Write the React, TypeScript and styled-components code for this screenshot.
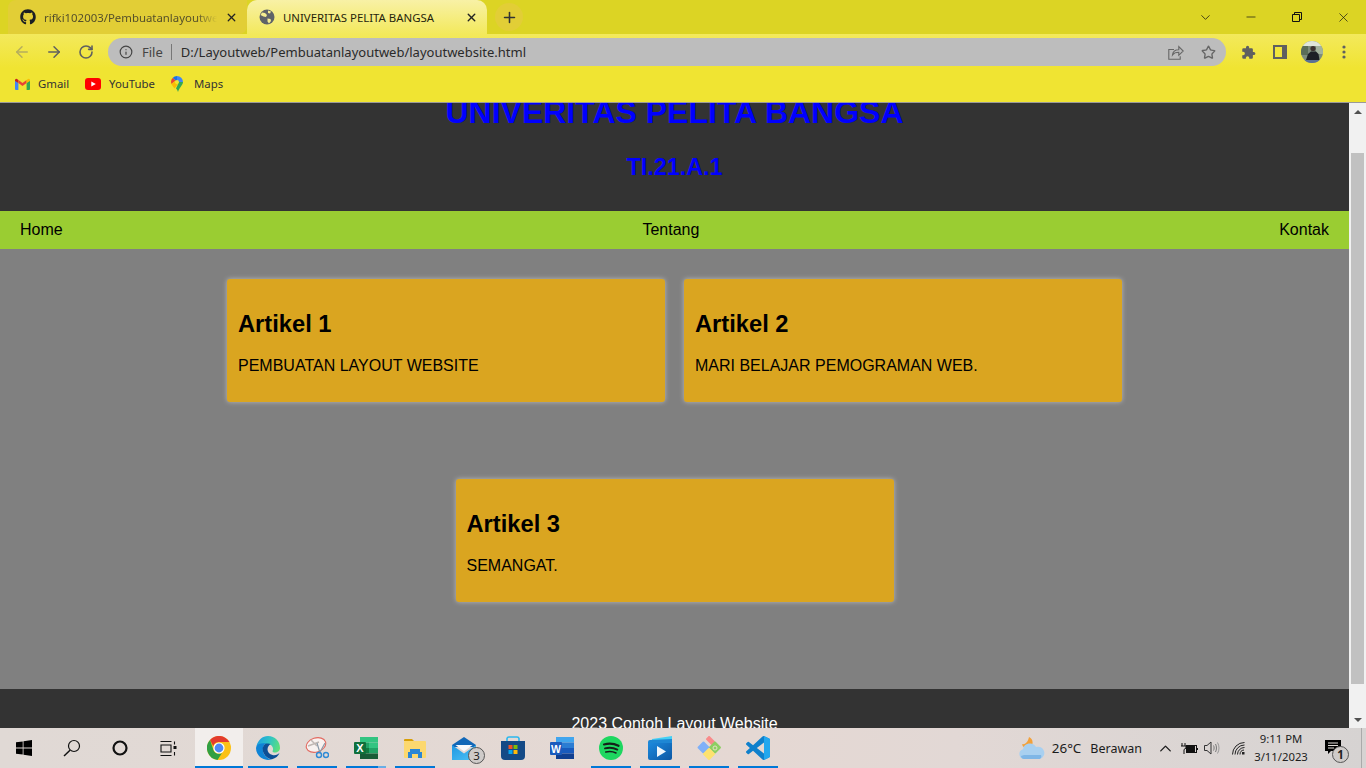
import React from 'react';
import styled, { createGlobalStyle } from 'styled-components';
import { FaGithub } from 'react-icons/fa';
import { ArrowLeft, ArrowRight, RotateCw, Info, Star, ChevronDown, ChevronUp, Minus, X, Plus } from 'lucide-react';

const GlobalStyle = createGlobalStyle`
  html, body {
    margin: 0;
    height: 100%;
    overflow: hidden;
    font-family: 'Liberation Sans', Arial, sans-serif;
  }
  * { box-sizing: border-box; }
`;

const Screen = styled.div`
  height: 768px;
  display: flex;
  flex-direction: column;
  overflow: hidden;
`;

const BrowserFrame = styled.div`
  flex: none;
  height: 103px;
  background: #f0e432;
  border-bottom: 1px solid #9a9a9a;
  font-family: 'Noto Sans', sans-serif;
`;

const TabStrip = styled.div`
  height: 34px;
  padding-left: 8px;
  display: flex;
  align-items: stretch;
  background: #dcd424;
`;

const InactiveTab = styled.div`
  width: 239px;
  padding: 0 9px 0 12px;
  display: flex;
  align-items: center;
  gap: 8px;
  background: #e2ce36;
  border-radius: 8px 0 8px 0;
  color: #55502a;
  font-size: 11.4px;
`;

const ActiveTab = styled.div`
  width: 240px;
  padding: 0 9px 0 12px;
  display: flex;
  align-items: center;
  gap: 8px;
  background: linear-gradient(#f8f1a6, #f3e95c);
  border-radius: 10px 10px 0 0;
  color: #26240c;
  font-size: 11.4px;
`;

const TabTitle = styled.span<{ $fade?: boolean }>`
  flex: 1;
  white-space: nowrap;
  overflow: hidden;
  ${(p) => p.$fade && 'mask-image: linear-gradient(to right, #000 88%, transparent);'}
`;

const TabClose = styled(X)`
  flex: none;
  color: #222;
`;

const NewTabButton = styled.div`
  align-self: center;
  width: 28px;
  height: 28px;
  margin-left: 8px;
  display: flex;
  align-items: center;
  justify-content: center;
  border-radius: 50%;
  background: #e2ce36;
  color: #333;
`;

const WindowControls = styled.div`
  margin-left: auto;
  display: flex;
`;

const WindowButton = styled.div`
  width: 46px;
  display: flex;
  align-items: center;
  justify-content: center;
  color: #111;
`;

const Toolbar = styled.div`
  height: 34px;
  padding: 2px 6px 0;
  display: flex;
  align-items: center;
  background: linear-gradient(#f3e95c, #f0e432);
`;

const NavButton = styled.div<{ $dim?: boolean }>`
  width: 32px;
  display: flex;
  justify-content: center;
  color: ${(p) => (p.$dim ? '#b5ad5e' : '#5f6060')};
`;

const Omnibox = styled.div`
  width: 1118px;
  height: 28px;
  margin: 0 6px;
  padding: 0 2px 0 11px;
  display: flex;
  align-items: center;
  border-radius: 14px;
  background: #bdbdbd;
  font-size: 13px;
  color: #2a2a2a;
`;

const SecurityLabel = styled.span`
  margin-left: 9px;
  padding-right: 8px;
  border-right: 1px solid #777;
  line-height: 16px;
  color: #444;
`;

const UrlText = styled.span`
  margin-left: 9px;
  flex: 1;
`;

const OmniAction = styled.div`
  width: 32px;
  display: flex;
  justify-content: center;
  color: #666;
`;

const ToolbarAction = styled.div`
  width: 32px;
  display: flex;
  justify-content: center;
  color: #5f6060;
`;

const Bookmarks = styled.div`
  height: 34px;
  padding: 0 0 3px 15px;
  display: flex;
  align-items: center;
  font-size: 11.4px;
  color: #333;
`;

const Bookmark = styled.div<{ $gap?: number; $width: number }>`
  width: ${(p) => p.$width}px;
  display: flex;
  align-items: center;
  gap: ${(p) => p.$gap ?? 8}px;
`;

const Viewport = styled.div`
  flex: 1;
  min-height: 0;
  display: flex;
`;

const Page = styled.div`
  flex: 1;
  min-width: 0;
  overflow: hidden;
  color: #000;
`;

const PageInner = styled.div`
  margin-top: -31px;
`;

const SiteHeader = styled.header`
  padding: 22px 0 30px;
  background: #333;
  color: #0000ff;
  text-align: center;
`;

const SiteTitle = styled.h1`
  margin: 0;
  font-size: 32px;
  line-height: 37px;
`;

const SiteSubtitle = styled.h2`
  margin: 23px 0 0;
  font-size: 23.4px;
  line-height: 27px;
`;

const NavBar = styled.nav`
  padding: 10px 20px;
  display: flex;
  justify-content: space-between;
  background: #9acd32;
  font-size: 16px;
  line-height: 18px;
`;

const Articles = styled.main`
  padding: 30px 0 87px;
  display: flex;
  flex-wrap: wrap;
  justify-content: center;
  gap: 77px 19px;
  background: #808080;
`;

const Card = styled.article`
  width: 438px;
  padding: 11px;
  border-radius: 3px;
  background: #daa520;
  box-shadow: 0 0 5px rgba(255, 255, 255, 0.45);
`;

const CardTitle = styled.h2`
  margin: 21px 0 19px;
  font-size: 23.7px;
  line-height: 27px;
`;

const CardText = styled.p`
  margin: 0 0 16px;
  font-size: 16px;
  line-height: 18px;
`;

const SiteFooter = styled.footer`
  padding: 26px 0 20px;
  background: #333;
  color: #fff;
  text-align: center;
  font-size: 16px;
  line-height: 18px;
`;

const Scrollbar = styled.div`
  flex: none;
  width: 17px;
  display: flex;
  flex-direction: column;
  align-items: center;
  background: #f1f1f1;
`;

const ScrollArrow = styled.div<{ $down?: boolean }>`
  flex: none;
  height: 17px;
  display: flex;
  align-items: center;
  justify-content: center;
  &::before {
    content: '';
    border-left: 4px solid transparent;
    border-right: 4px solid transparent;
    ${(p) => (p.$down ? 'border-top: 4px solid #505050;' : 'border-bottom: 4px solid #505050;')}
  }
`;

const ScrollTrack = styled.div`
  flex: 1;
  width: 100%;
  padding: 33px 2px 27px;
  display: flex;
`;

const ScrollThumb = styled.div`
  flex: 1;
  background: #c1c1c1;
`;

const Taskbar = styled.div`
  flex: none;
  height: 40px;
  display: flex;
  align-items: stretch;
  background: linear-gradient(90deg, #e0d9d5 0%, #e5d8d3 55%, #e2d8d5 70%, #d6d3d2 100%);
  font-family: 'Noto Sans', sans-serif;
  color: #1c1c1c;
`;

const TaskSlot = styled.div`
  width: 48px;
  display: flex;
  align-items: center;
  justify-content: center;
`;

const AppStrip = styled.div`
  margin-left: 3px;
  display: flex;
  align-items: stretch;
`;

const AppSlot = styled.div<{ $active?: boolean; $running?: boolean; $split?: boolean }>`
  position: relative;
  width: 48px;
  margin-right: 1px;
  display: flex;
  align-items: center;
  justify-content: center;
  background: ${(p) => (p.$active ? '#f2eeec' : 'transparent')};
  &::after {
    content: '';
    display: ${(p) => (p.$running ? 'block' : 'none')};
    position: absolute;
    bottom: 0;
    height: 2px;
    left: ${(p) => (p.$active ? 0 : 4)}px;
    right: ${(p) => (p.$active ? 0 : 4)}px;
    background: ${(p) =>
      p.$split ? 'linear-gradient(90deg, #0078d7 80%, #68aee6 80%)' : '#0078d7'};
  }
`;

const Badge = styled.span`
  position: absolute;
  right: 3px;
  bottom: 4px;
  width: 17px;
  height: 17px;
  display: flex;
  align-items: center;
  justify-content: center;
  border: 1px solid #555;
  border-radius: 50%;
  background: #cfcbc9;
  font-size: 11.5px;
  line-height: 1;
  color: #222;
`;

const Tray = styled.div`
  margin-left: auto;
  padding-right: 4px;
  display: flex;
  align-items: center;
  font-size: 12.5px;
`;

const Weather = styled.div`
  display: flex;
  align-items: center;
  gap: 7px;
  margin-right: 12px;
`;

const Temperature = styled.span`
  margin-right: 2px;
  font-size: 13.4px;
`;

const TrayIcon = styled.div<{ $width: number }>`
  width: ${(p) => p.$width}px;
  display: flex;
  justify-content: center;
`;

const Clock = styled.div`
  width: 54px;
  text-align: center;
  white-space: nowrap;
  font-size: 11.3px;
  line-height: 18px;
`;

const Notification = styled.div`
  position: relative;
  width: 32px;
  margin: 0 12px 0 9px;
  display: flex;
  justify-content: center;
`;

const NotificationBadge = styled(Badge)`
  right: 0;
  bottom: -7px;
  font-weight: 700;
`;

const TrayEdge = styled.div`
  align-self: stretch;
  width: 1px;
  background: #aaa;
`;

const GlobeIcon = () => (
  <svg width="16" height="16" viewBox="0 0 16 16">
    <circle cx="8" cy="8" r="7.5" fill="#5f6368" />
    <path d="M3 3.5l3 .5 2 2-1 2-2.5-.5L1.5 6zM9 1.5l3 1-1 2-2-.5zM8.5 9.5l3 .5.5 2-2 2.5-1.5-2z" fill="#f5ee90" />
  </svg>
);

const ShareIcon = () => (
  <svg width="16" height="16" viewBox="0 0 16 16" fill="none" stroke="currentColor" strokeWidth="1.1">
    <path d="M6 5.500H.8v9.700h11.400v-3" />
    <path d="M4.500 11c.3-3.300 3-5.300 6.300-5.300V2.500l4.400 4.500-4.400 4.300V8.300c-2.700 0-5 .8-6.300 2.700z" />
  </svg>
);

const SidePanelIcon = () => (
  <svg width="14" height="14" viewBox="0 0 14 14">
    <rect width="14" height="14" fill="#5f6060" />
    <rect x="2" y="2" width="7" height="10" fill="#f1e63c" />
  </svg>
);

const PuzzleIcon = () => (
  <svg width="15" height="15" viewBox="0 0 24 24" fill="#5f6060">
    <path d="M20.5 11H19V7a2 2 0 0 0-2-2h-4V3.5a2.5 2.5 0 0 0-5 0V5H4a2 2 0 0 0-2 2v3.8h1.5a2.7 2.7 0 0 1 0 5.4H2V20a2 2 0 0 0 2 2h3.8v-1.5a2.7 2.7 0 0 1 5.4 0V22H17a2 2 0 0 0 2-2v-4h1.5a2.5 2.5 0 0 0 0-5z" />
  </svg>
);

const AvatarIcon = () => (
  <svg width="22" height="22" viewBox="0 0 22 22">
    <defs>
      <clipPath id="avatar-clip">
        <circle cx="11" cy="11" r="11" />
      </clipPath>
    </defs>
    <g clipPath="url(#avatar-clip)">
      <rect width="22" height="22" fill="#7d8c7c" />
      <rect width="22" height="5" fill="#dfe6da" />
      <rect y="5" width="7" height="9" fill="#5a6d58" />
      <rect x="15" y="5" width="7" height="8" fill="#a3b39e" />
      <circle cx="12" cy="7.500" r="2.600" fill="#3c3230" />
      <path d="M5 19l2-6 3-2.500h5l2.500 2.500 1 6z" fill="#1d2026" />
      <path d="M2 19h18v3H2z" fill="#5b7194" />
    </g>
  </svg>
);

const MenuDots = () => (
  <svg width="4" height="14" viewBox="0 0 4 14" fill="#5f6060">
    <circle cx="2" cy="2" r="1.6" />
    <circle cx="2" cy="7" r="1.6" />
    <circle cx="2" cy="12" r="1.6" />
  </svg>
);

const RestoreIcon = () => (
  <svg width="10" height="10" viewBox="0 0 10 10" fill="none" stroke="#111">
    <path d="M.5 2.5h7v7h-7zM2.5 2.5v-2h7v7h-2" />
  </svg>
);

const GmailIcon = () => (
  <svg width="15" height="12" viewBox="0 0 15 12">
    <path d="M0 2v9a1 1 0 0 0 1 1h2.4V5z" fill="#4285f4" />
    <path d="M15 2v9a1 1 0 0 1-1 1h-2.4V5z" fill="#34a853" />
    <path d="M0 2a1.3 1.3 0 0 1 2-1l1.4 1V5L0 3z" fill="#c5221f" />
    <path d="M3.4 2l4.1 3 4.1-3v3L7.5 8 3.4 5z" fill="#ea4335" />
    <path d="M15 2a1.3 1.3 0 0 0-2-1l-1.4 1v3L15 3z" fill="#fbbc04" />
  </svg>
);

const YouTubeIcon = () => (
  <svg width="16" height="12" viewBox="0 0 16 12">
    <rect width="16" height="12" rx="3" fill="#f00" />
    <path d="M6.3 3.4L10.8 6l-4.5 2.6z" fill="#fff" />
  </svg>
);

const MapsIcon = () => (
  <svg width="12" height="16" viewBox="0 0 12 16">
    <path d="M6 0a6 6 0 0 1 6 6L8 6a2 2 0 0 0-2-2z" fill="#4285f4" />
    <path d="M6 0a6 6 0 0 0-4.4 2L4.6 4.6A2 2 0 0 1 6 4z" fill="#1a73e8" />
    <path d="M1.6 2A6 6 0 0 0 .4 8l4.2-3.4z" fill="#ea4335" />
    <path d="M.4 8C1.4 10 2.6 11 3.6 12.6L7.4 7.6a2 2 0 0 1-2.8-3z" fill="#fbbc04" />
    <path d="M12 6c0 3.2-3.8 5.4-5 10-.4-1.4-1-2.4-2-3.4L7.4 7.6A2 2 0 0 0 8 6z" fill="#34a853" />
  </svg>
);

const WindowsIcon = () => (
  <svg width="16" height="16" viewBox="0 0 16 16" fill="#000">
    <path d="M0 2.3l6.7-.9v6.2H0zM7.5 1.3L16 0v7.6H7.5zM0 8.4h6.7v6.2L0 13.700zM7.5 8.400H16V16l-8.500-1.200z" />
  </svg>
);

const SearchIcon = () => (
  <svg width="18" height="18" viewBox="0 0 18 18" fill="none" stroke="#111" strokeWidth="1.200">
    <circle cx="11" cy="7" r="5.500" />
    <path d="M7 11.200L1 17" strokeWidth="1.500" />
  </svg>
);

const CortanaIcon = () => (
  <svg width="16" height="16" viewBox="0 0 16 16" fill="none" stroke="#111" strokeWidth="2.2">
    <circle cx="8" cy="8" r="6.5" />
  </svg>
);

const TaskViewIcon = () => (
  <svg width="17" height="15" viewBox="0 0 17 15" fill="none" stroke="#111" strokeWidth="1.1">
    <path d="M.5.5h11M.5 14.5h11M1 4h10v7H1zM14.5.5v3M14.5 11v3.5" />
    <rect x="13.5" y="5" width="3" height="3" fill="#111" stroke="none" />
  </svg>
);

const ChromeIcon = () => (
  <svg width="24" height="24" viewBox="0 0 24 24">
    <circle cx="12" cy="12" r="12" fill="#fbc116" />
    <path d="M3 4A12 12 0 0 1 22.4 6H12A6 6 0 0 0 6.3 10.2z" fill="#e33b2e" />
    <path d="M3 4A12 12 0 0 0 10.5 23.9L15 17A6 6 0 0 1 6.8 15z" fill="#319f43" />
    <circle cx="12" cy="12" r="5.6" fill="#fff" />
    <circle cx="12" cy="12" r="4.4" fill="#4f89f3" />
  </svg>
);

const EdgeIcon = () => (
  <svg width="24" height="24" viewBox="0 0 24 24">
    <defs>
      <linearGradient id="edge-top" x1="0" y1="0.3" x2="1" y2="0.6">
        <stop offset="0" stopColor="#1b9de2" />
        <stop offset="0.5" stopColor="#2fc4c4" />
        <stop offset="1" stopColor="#5fe07a" />
      </linearGradient>
    </defs>
    <path d="M.5 10C2 4 6.500 0 12 0c7 0 12 5 12 12 0 3-3 5-6 4.500-2-.4-1.500-1.500-1-2.500.6-2-1-6-6-6-5 0-9.500 1-10.500 2z" fill="url(#edge-top)" />
    <path d="M.5 10C1.500 8 6 6.500 10 7.500 7.500 9 6.500 12 7 15c.7 4 4 8 9 8.300A12 12 0 0 1 0 12z" fill="#0f84d6" />
    <path d="M10 7.500C7 9 6 12.500 7 15.500c1 4 5 7.500 9 7.800 3.500-.8 6.500-3.500 7.500-6.300-1.500 1.500-4 2.700-7 2-3-.7-5-3-5-5.500 0-2.500 1.500-4.500 3-5.500-1.500-.5-3-.5-4.500-.5z" fill="#0c4f96" />
  </svg>
);

const SnipIcon = () => (
  <svg width="24" height="24" viewBox="0 0 24 24">
    <ellipse cx="11" cy="9" rx="10" ry="7" transform="rotate(-18 11 9)" fill="#f8f2f0" stroke="#e2685f" strokeWidth="1.100" />
    <path d="M3 10l11-4M6 4l6 6" stroke="#c0b8b4" strokeWidth="1.500" />
    <path d="M12 7l3 10M20 7l-5.500 10" stroke="#8a9aa8" strokeWidth="1.200" />
    <circle cx="14" cy="19" r="2.500" fill="none" stroke="#2d8ad6" strokeWidth="1.400" />
    <circle cx="21" cy="19" r="2.500" fill="none" stroke="#2d8ad6" strokeWidth="1.400" />
  </svg>
);

const ExcelIcon = () => (
  <svg width="24" height="22" viewBox="0 0 24 22">
    <rect x="6" width="18" height="5.500" fill="#33c481" />
    <rect x="6" y="5.500" width="9" height="5.500" fill="#21a366" />
    <rect x="15" y="5.500" width="9" height="5.500" fill="#33c481" />
    <rect x="6" y="11" width="9" height="5.500" fill="#107c41" />
    <rect x="15" y="11" width="9" height="5.500" fill="#21a366" />
    <rect x="6" y="16.500" width="18" height="5.500" fill="#185c37" />
    <rect y="5" width="12" height="12" rx="1" fill="#10703c" />
    <text x="6" y="15" textAnchor="middle" fontFamily="Liberation Sans" fontWeight="700" fontSize="11" fill="#fff">X</text>
  </svg>
);

const ExplorerIcon = () => (
  <svg width="22" height="19" viewBox="0 0 22 19">
    <path d="M0 1a1 1 0 0 1 1-1h7l2 2H0z" fill="#d89f08" />
    <rect y="2" width="22" height="17" rx="1" fill="#fcd86f" />
    <path d="M6 10h10v3h2v6H14v-4h-6v4H4v-6h2z" fill="#2a86d6" />
  </svg>
);

const MailIcon = () => (
  <svg width="24" height="23" viewBox="0 0 24 23">
    <defs>
      <linearGradient id="mail-body" x1="0" y1="0" x2="1" y2="1">
        <stop offset="0" stopColor="#1f97e2" />
        <stop offset="1" stopColor="#4cc2f5" />
      </linearGradient>
    </defs>
    <path d="M0 8L12 0l12 8v2H0z" fill="#1067b8" />
    <path d="M3.500 8h17L12 14.500z" fill="#f6f9fc" />
    <path d="M0 8l12 8.500L24 8v15H0z" fill="url(#mail-body)" />
  </svg>
);

const StoreIcon = () => (
  <svg width="24" height="24" viewBox="0 0 24 24">
    <path d="M6 5V2.500A2 2 0 0 1 8 1h8a2 2 0 0 1 2 1.500V5" fill="none" stroke="#2bb8ee" strokeWidth="1.600" />
    <path d="M0 5h24v15a4 4 0 0 1-4 4H4a4 4 0 0 1-4-4z" fill="#144a86" />
    <rect x="7.500" y="9" width="4" height="4" fill="#f35325" />
    <rect x="12.500" y="9" width="4" height="4" fill="#81bc06" />
    <rect x="7.500" y="14" width="4" height="4" fill="#05a6f0" />
    <rect x="12.500" y="14" width="4" height="4" fill="#ffba08" />
  </svg>
);

const WordIcon = () => (
  <svg width="24" height="22" viewBox="0 0 24 22">
    <rect x="6" width="18" height="5.500" fill="#41a5ee" />
    <rect x="6" y="5.500" width="18" height="5.500" fill="#2b7cd3" />
    <rect x="6" y="11" width="18" height="5.500" fill="#185abd" />
    <rect x="6" y="16.500" width="18" height="5.500" fill="#103f91" />
    <rect y="5" width="12" height="13" rx="1" fill="#1b5bbd" />
    <text x="6" y="15.500" textAnchor="middle" fontFamily="Liberation Sans" fontWeight="700" fontSize="10.500" fill="#fff">W</text>
  </svg>
);

const SpotifyIcon = () => (
  <svg width="24" height="24" viewBox="0 0 24 24" fill="none" stroke="#14201a" strokeLinecap="round">
    <circle cx="12" cy="12" r="12" fill="#1ed760" stroke="none" />
    <path d="M5 8.500c5-1.400 10-1 14.500 1.300" strokeWidth="2.200" />
    <path d="M6 12.400c4.500-1.100 8.500-.7 12.300 1.200" strokeWidth="1.900" />
    <path d="M6.800 16c3.800-.8 7.200-.5 10.200 1" strokeWidth="1.600" />
  </svg>
);

const MediaIcon = () => (
  <svg width="24" height="24" viewBox="0 0 24 24">
    <defs>
      <linearGradient id="media-body" x1="0" y1="0" x2="1" y2="1">
        <stop offset="0" stopColor="#1c8ade" />
        <stop offset="1" stopColor="#0c57a3" />
      </linearGradient>
    </defs>
    <path d="M4 3L24 0v5L4 6z" fill="#45d0f5" />
    <path d="M0 6a2 2 0 0 1 2-2l22-1v4H0z" fill="#1e87d4" />
    <path d="M0 7h24v15a2 2 0 0 1-2 2H2a2 2 0 0 1-2-2z" fill="url(#media-body)" />
    <path d="M9 10l9 5.500-9 5.500z" fill="#eef6fc" />
  </svg>
);

const GitIcon = () => (
  <svg width="24" height="24" viewBox="0 0 24 24">
    <rect x="9" y="2" width="9" height="5" rx="1" transform="rotate(45 13.500 4.500)" fill="#f98b8b" />
    <rect x="13.500" y="7" width="9" height="9" rx="1" transform="rotate(45 18 11.500)" fill="#8ccf63" />
    <circle cx="18" cy="12" r="2" fill="none" stroke="#e6e2c4" strokeWidth="1" />
    <rect x="2" y="7" width="9" height="9" rx="1" transform="rotate(45 6.500 11.500)" fill="#7fb0f8" />
    <rect x="7.500" y="13.500" width="9" height="9" rx="1" transform="rotate(45 12 18)" fill="#fde26f" />
  </svg>
);

const VsCodeIcon = () => (
  <svg width="24" height="24" viewBox="0 0 24 24">
    <path d="M23.150 2.587L18.210.210a1.494 1.494 0 0 0-1.705.290l-9.460 8.630-4.120-3.128a.999.999 0 0 0-1.276.057L.327 7.261A1 1 0 0 0 .326 8.740L3.899 12 .326 15.260a1 1 0 0 0 .001 1.479L1.650 17.940a.999.999 0 0 0 1.276.057l4.120-3.128 9.460 8.630a1.492 1.492 0 0 0 1.704.290l4.942-2.377A1.500 1.500 0 0 0 24 20.060V3.939a1.500 1.500 0 0 0-.850-1.352zm-5.146 14.861L10.826 12l7.178-5.448v10.896z" fill="#0f80cc" />
    <path d="M18 .100l5.150 2.487A1.500 1.500 0 0 1 24 3.940v16.120a1.500 1.500 0 0 1-.850 1.350L18 23.900z" fill="#23a7ee" />
  </svg>
);

const WeatherIcon = () => (
  <svg width="26" height="24" viewBox="0 0 26 24">
    <path d="M10 1a6 6 0 0 1 0 11 5 5 0 0 1-7-4c3 1 6-2 7-7z" fill="#f3a13a" />
    <path d="M5 23a5 5 0 0 1-1-9.800A7 7 0 0 1 17 11a5.500 5.500 0 0 1 4 12z" fill="#a9d0f0" />
    <path d="M5 19h17c1 2-.5 4-2 4H5c-2 0-3-2-3-3z" fill="#7fb6e6" />
  </svg>
);

const BatteryIcon = () => (
  <svg width="17" height="13" viewBox="0 0 17 13" fill="none" stroke="#111">
    <path d="M1 1v3M4 1v3M0 4h5v2l-2 1.500M3 7.500V12" />
    <rect x="5.500" y="3.500" width="10" height="7" />
    <rect x="5.500" y="3.500" width="8" height="7" fill="#111" />
    <path d="M16.500 6v2" />
  </svg>
);

const VolumeIcon = () => (
  <svg width="16" height="14" viewBox="0 0 16 14" fill="none" stroke="#333">
    <path d="M.5 4.500h2.500L7 1v12L3 9.500H.5z" />
    <path d="M9.500 4.500c.8 1.500.8 3.500 0 5M11.500 3c1.300 2.500 1.300 5.500 0 8" stroke="#777" />
    <path d="M13.500 1.500c2 3.500 2 7.500 0 11" stroke="#999" />
  </svg>
);

const WifiIcon = () => (
  <svg width="13" height="13" viewBox="0 0 13 13" fill="none" stroke="#222">
    <path d="M.500 12.500A12 12 0 0 1 12.500.500" />
    <path d="M3 12.500A9.500 9.500 0 0 1 12.500 3" />
    <path d="M5.500 12.500a7 7 0 0 1 7-7" />
    <path d="M8 12.500a4.500 4.500 0 0 1 4-4.500" />
    <rect x="10" y="10" width="2.500" height="2.500" fill="#222" stroke="none" />
  </svg>
);

const NotificationIcon = () => (
  <svg width="16" height="16" viewBox="0 0 16 16">
    <path d="M0 0h16v11H6l-3 3v-3H0z" fill="#000" />
    <path d="M3 3h10M3 5.500h10M3 8h6" stroke="#e0dcd8" />
  </svg>
);

const taskApps = [
  { key: 'chrome', icon: <ChromeIcon />, active: true, running: true },
  { key: 'edge', icon: <EdgeIcon />, running: true },
  { key: 'snip', icon: <SnipIcon />, running: true },
  { key: 'excel', icon: <ExcelIcon />, running: true, split: true },
  { key: 'explorer', icon: <ExplorerIcon />, running: true },
  { key: 'mail', icon: <MailIcon />, badge: '3' },
  { key: 'store', icon: <StoreIcon /> },
  { key: 'word', icon: <WordIcon /> },
  { key: 'spotify', icon: <SpotifyIcon />, running: true },
  { key: 'media', icon: <MediaIcon />, running: true },
  { key: 'git', icon: <GitIcon />, running: true },
  { key: 'vscode', icon: <VsCodeIcon />, running: true },
];

const articles = [
  { title: 'Artikel 1', text: 'PEMBUATAN LAYOUT WEBSITE' },
  { title: 'Artikel 2', text: 'MARI BELAJAR PEMOGRAMAN WEB.' },
  { title: 'Artikel 3', text: 'SEMANGAT.' },
];

const App: React.FC = () => {
  return (
    <Screen>
      <GlobalStyle />
      <BrowserFrame>
        <TabStrip>
          <InactiveTab>
            <FaGithub size={16} color="#1b1f23" />
            <TabTitle $fade>rifki102003/Pembuatanlayoutweb</TabTitle>
            <TabClose size={13} strokeWidth={2.4} />
          </InactiveTab>
          <ActiveTab>
            <GlobeIcon />
            <TabTitle>UNIVERITAS PELITA BANGSA</TabTitle>
            <TabClose size={13} strokeWidth={2.6} />
          </ActiveTab>
          <NewTabButton>
            <Plus size={17} strokeWidth={2.2} />
          </NewTabButton>
          <WindowControls>
            <WindowButton>
              <ChevronDown size={15} strokeWidth={1.2} />
            </WindowButton>
            <WindowButton>
              <Minus size={14} strokeWidth={1.2} />
            </WindowButton>
            <WindowButton>
              <RestoreIcon />
            </WindowButton>
            <WindowButton>
              <X size={15} strokeWidth={1.1} />
            </WindowButton>
          </WindowControls>
        </TabStrip>
        <Toolbar>
          <NavButton $dim>
            <ArrowLeft size={18} />
          </NavButton>
          <NavButton>
            <ArrowRight size={18} />
          </NavButton>
          <NavButton>
            <RotateCw size={16} strokeWidth={2.4} />
          </NavButton>
          <Omnibox>
            <Info size={14} color="#444" />
            <SecurityLabel>File</SecurityLabel>
            <UrlText>D:/Layoutweb/Pembuatanlayoutweb/layoutwebsite.html</UrlText>
            <OmniAction>
              <ShareIcon />
            </OmniAction>
            <OmniAction>
              <Star size={15} strokeWidth={2.2} />
            </OmniAction>
          </Omnibox>
          <ToolbarAction>
            <PuzzleIcon />
          </ToolbarAction>
          <ToolbarAction>
            <SidePanelIcon />
          </ToolbarAction>
          <ToolbarAction>
            <AvatarIcon />
          </ToolbarAction>
          <ToolbarAction>
            <MenuDots />
          </ToolbarAction>
        </Toolbar>
        <Bookmarks>
          <Bookmark $width={70}>
            <GmailIcon />
            Gmail
          </Bookmark>
          <Bookmark $width={86}>
            <YouTubeIcon />
            YouTube
          </Bookmark>
          <Bookmark $width={70} $gap={11}>
            <MapsIcon />
            Maps
          </Bookmark>
        </Bookmarks>
      </BrowserFrame>

      <Viewport>
        <Page>
          <PageInner>
            <SiteHeader>
              <SiteTitle>UNIVERITAS PELITA BANGSA</SiteTitle>
              <SiteSubtitle>TI.21.A.1</SiteSubtitle>
            </SiteHeader>
            <NavBar>
              <span>Home</span>
              <span>Tentang</span>
              <span>Kontak</span>
            </NavBar>
            <Articles>
              {articles.map((a) => (
                <Card key={a.title}>
                  <CardTitle>{a.title}</CardTitle>
                  <CardText>{a.text}</CardText>
                </Card>
              ))}
            </Articles>
            <SiteFooter>2023 Contoh Layout Website</SiteFooter>
          </PageInner>
        </Page>
        <Scrollbar>
          <ScrollArrow />
          <ScrollTrack>
            <ScrollThumb />
          </ScrollTrack>
          <ScrollArrow $down />
        </Scrollbar>
      </Viewport>

      <Taskbar>
        <TaskSlot>
          <WindowsIcon />
        </TaskSlot>
        <TaskSlot>
          <SearchIcon />
        </TaskSlot>
        <TaskSlot>
          <CortanaIcon />
        </TaskSlot>
        <TaskSlot>
          <TaskViewIcon />
        </TaskSlot>
        <AppStrip>
          {taskApps.map((a) => (
            <AppSlot key={a.key} $active={a.active} $running={a.running} $split={a.split}>
              {a.icon}
              {a.badge && <Badge>{a.badge}</Badge>}
            </AppSlot>
          ))}
        </AppStrip>
        <Tray>
          <Weather>
            <WeatherIcon />
            <Temperature>26°C</Temperature>
            <span>Berawan</span>
          </Weather>
          <TrayIcon $width={22}>
            <ChevronUp size={19} strokeWidth={1.7} />
          </TrayIcon>
          <TrayIcon $width={26}>
            <BatteryIcon />
          </TrayIcon>
          <TrayIcon $width={20}>
            <VolumeIcon />
          </TrayIcon>
          <TrayIcon $width={32}>
            <WifiIcon />
          </TrayIcon>
          <Clock>
            <div>9:11 PM</div>
            <div>3/11/2023</div>
          </Clock>
          <Notification>
            <NotificationIcon />
            <NotificationBadge>1</NotificationBadge>
          </Notification>
          <TrayEdge />
        </Tray>
      </Taskbar>
    </Screen>
  );
};

export default App;
